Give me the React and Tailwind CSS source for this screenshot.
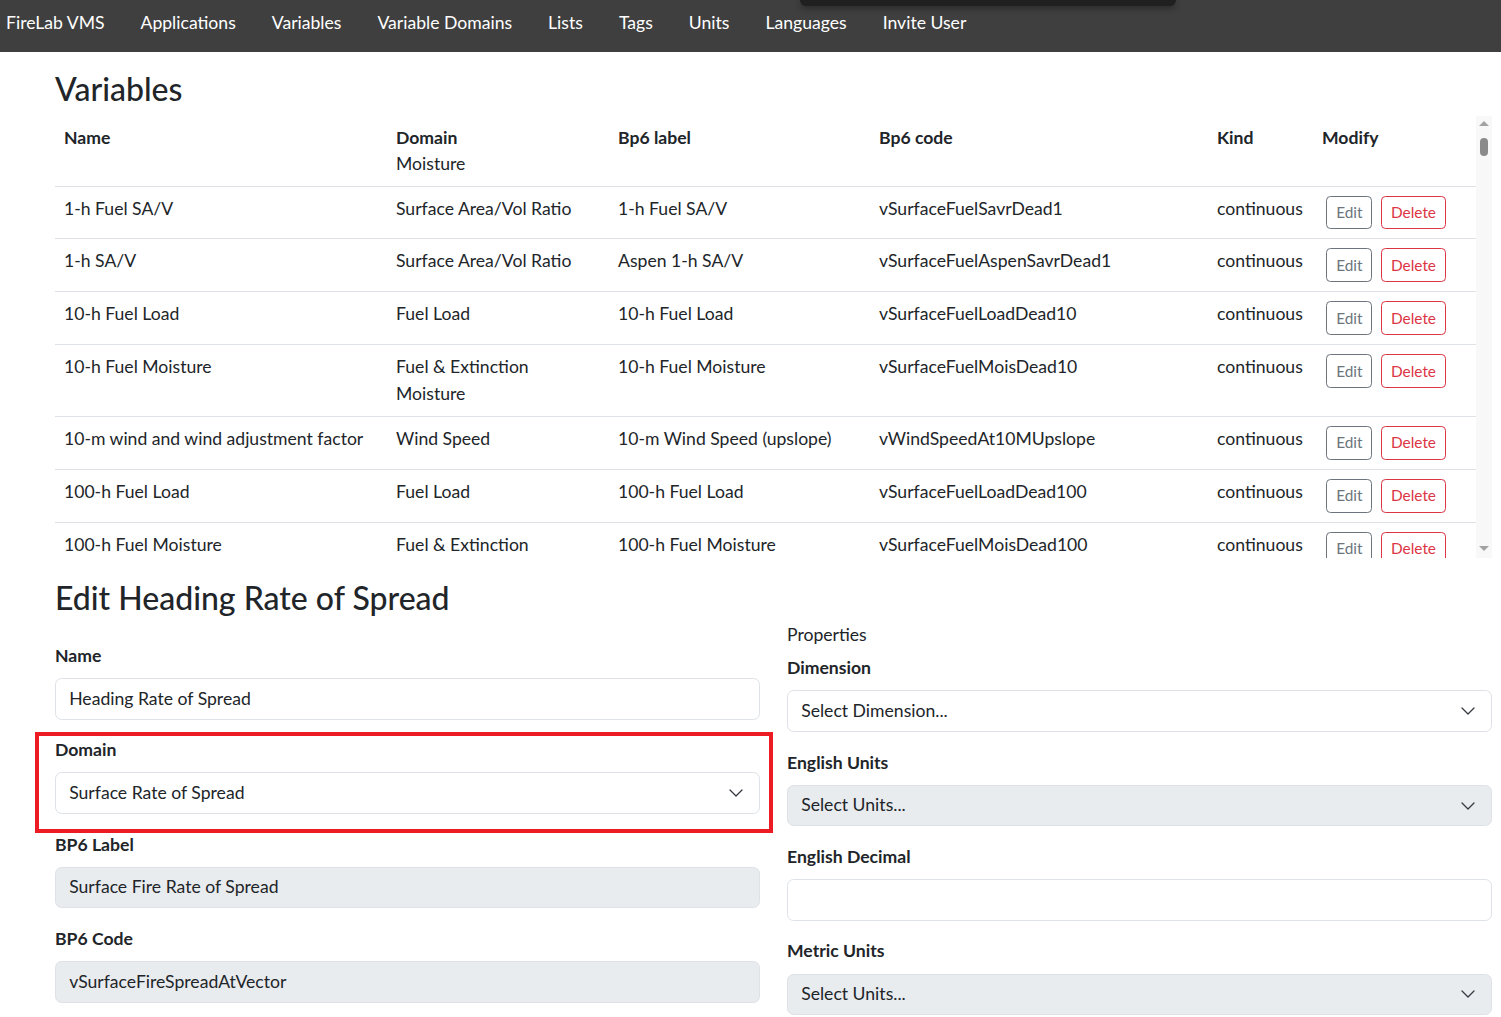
import React from 'react';

const navLinks = ['Applications', 'Variables', 'Variable Domains', 'Lists', 'Tags', 'Units', 'Languages', 'Invite User'];

const variables = [
  { name: '1-h Fuel SA/V', domain: 'Surface Area/Vol Ratio', label: '1-h Fuel SA/V', code: 'vSurfaceFuelSavrDead1' },
  { name: '1-h SA/V', domain: 'Surface Area/Vol Ratio', label: 'Aspen 1-h SA/V', code: 'vSurfaceFuelAspenSavrDead1' },
  { name: '10-h Fuel Load', domain: 'Fuel Load', label: '10-h Fuel Load', code: 'vSurfaceFuelLoadDead10' },
  { name: '10-h Fuel Moisture', domain: 'Fuel & Extinction Moisture', label: '10-h Fuel Moisture', code: 'vSurfaceFuelMoisDead10' },
  { name: '10-m wind and wind adjustment factor', domain: 'Wind Speed', label: '10-m Wind Speed (upslope)', code: 'vWindSpeedAt10MUpslope' },
  { name: '100-h Fuel Load', domain: 'Fuel Load', label: '100-h Fuel Load', code: 'vSurfaceFuelLoadDead100' },
  { name: '100-h Fuel Moisture', domain: 'Fuel & Extinction Moisture', label: '100-h Fuel Moisture', code: 'vSurfaceFuelMoisDead100' },
];

const cols = 'grid grid-cols-[332px_222px_261px_338px_105px_163px]';

function Chevron() {
  return (
    <svg width="16" height="16" viewBox="0 0 16 16" className="shrink-0">
      <path d="M2 5l6 6 6-6" fill="none" stroke="#343a40" strokeWidth="1.3" strokeLinecap="round" strokeLinejoin="round" />
    </svg>
  );
}

function Field({ label, value, select, disabled }) {
  return (
    <div className="mb-[17.6px]">
      <div className="font-bold mb-[8.8px]">{label}</div>
      <div
        className={`h-[41.6px] border border-[#dee2e6] rounded-[6.6px] pl-[13.2px] pr-[15px] flex items-center justify-between ${disabled ? 'bg-[#e9ecef]' : 'bg-white'}`}
      >
        <span>{value}</span>
        {select && <Chevron />}
      </div>
    </div>
  );
}

export default function App() {
  return (
    <div className="min-h-screen bg-white text-[#212529] text-[17.6px] leading-[1.5] font-[Lato,sans-serif]">
      {/* navbar */}
      <nav className="relative h-[52px] bg-[#3f3f3f] text-white flex items-start pt-[10px] pl-[6px]">
        <span className="mr-[36px]">FireLab VMS</span>
        <div className="flex gap-[36px]">
          {navLinks.map((l) => (
            <span key={l}>{l}</span>
          ))}
        </div>
        <div className="absolute left-[800px] top-0 w-[376px] h-[6px] bg-[#202020] rounded-b-[6px] shadow-[0_2px_6px_rgba(0,0,0,0.4)]" />
      </nav>

      <main className="pl-[55px] pr-[9px] pt-[18px]">
        <h3 className="text-[32px] leading-[37px] font-medium mb-[8.8px]">Variables</h3>

        {/* variables table */}
        <div className="flex h-[442px] overflow-hidden">
          <div className="w-[1421px] shrink-0">
            <div className={`${cols} font-bold`}>
              <div className="px-[9px] pt-[9px]">Name</div>
              <div className="px-[9px] pt-[9px]">Domain</div>
              <div className="px-[9px] pt-[9px]">Bp6 label</div>
              <div className="px-[9px] pt-[9px]">Bp6 code</div>
              <div className="px-[9px] pt-[9px]">Kind</div>
              <div className="px-[9px] pt-[9px]">Modify</div>
            </div>
            <div className={`${cols} border-b border-[#dee2e6]`}>
              <div />
              <div className="px-[9px] pb-[8px]">Moisture</div>
            </div>
            {variables.map((v) => (
              <div key={v.code} className={`${cols} border-b border-[#dee2e6]`}>
                <div className="p-[9px]">{v.name}</div>
                <div className="p-[9px]">{v.domain}</div>
                <div className="p-[9px]">{v.label}</div>
                <div className="p-[9px]">{v.code}</div>
                <div className="p-[9px]">continuous</div>
                <div className="p-[9px] flex items-start">
                  <button className="mx-[4.4px] border border-[#6c757d] text-[#6c757d] rounded-[4.4px] px-[8.8px] py-[4.4px] text-[15.4px] leading-[1.5]">
                    Edit
                  </button>
                  <button className="mx-[4.4px] border border-[#dc3545] text-[#dc3545] rounded-[4.4px] px-[8.8px] py-[4.4px] text-[15.4px] leading-[1.5]">
                    Delete
                  </button>
                </div>
              </div>
            ))}
          </div>
          {/* scrollbar */}
          <div className="w-[16px] bg-[#f8f8f8] flex flex-col items-center justify-between py-[5px]">
            <div className="flex flex-col items-center">
              <div className="w-0 h-0 border-x-[5px] border-x-transparent border-b-[5px] border-b-[#a3a3a3]" />
              <div className="mt-[12px] w-[8px] h-[18px] rounded-full bg-[#8b8b8b]" />
            </div>
            <div className="w-0 h-0 border-x-[5px] border-x-transparent border-t-[5px] border-t-[#a3a3a3] mb-[2px]" />
          </div>
        </div>

        {/* edit form */}
        <h3 className="text-[32px] leading-[37px] font-medium mt-[21px] mb-[6px]">Edit Heading Rate of Spread</h3>
        <div className="grid grid-cols-2 gap-x-[27px]">
          <div className="relative pt-[21px]">
            <Field label="Name" value="Heading Rate of Spread" />
            <Field label="Domain" value="Surface Rate of Spread" select />
            <Field label="BP6 Label" value="Surface Fire Rate of Spread" disabled />
            <Field label="BP6 Code" value="vSurfaceFireSpreadAtVector" disabled />
            <div className="absolute left-[-20px] top-[110px] w-[738px] h-[101px] border-4 border-[#ed1c24] pointer-events-none" />
          </div>
          <div>
            <div className="mb-[7px]">Properties</div>
            <Field label="Dimension" value="Select Dimension..." select />
            <Field label="English Units" value="Select Units..." select disabled />
            <Field label="English Decimal" value="" />
            <Field label="Metric Units" value="Select Units..." select disabled />
          </div>
        </div>
      </main>
    </div>
  );
}
